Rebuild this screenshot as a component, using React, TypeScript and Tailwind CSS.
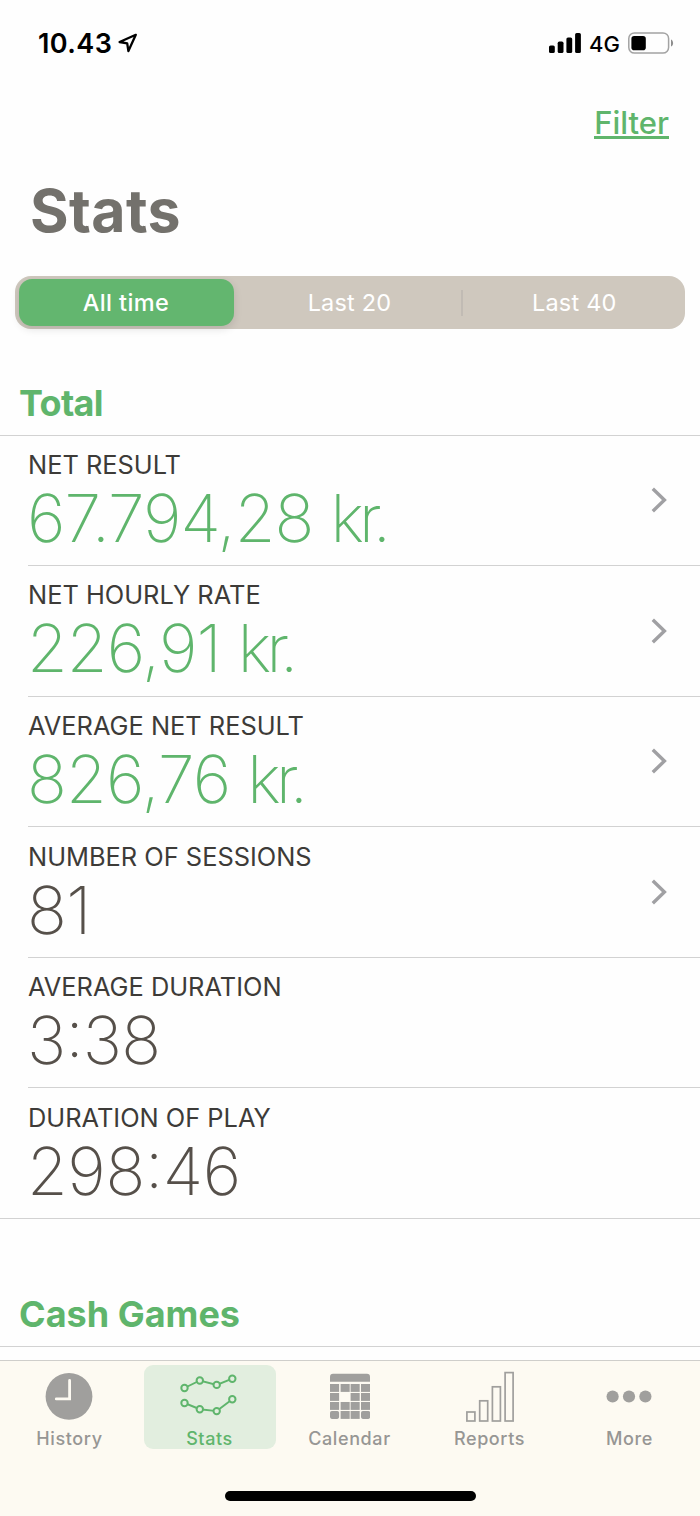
type Stat = {
  label: string;
  value: string;
  spacing: string;
  unit?: string;
  link?: boolean;
};

const stats: Stat[] = [
  { label: "NET RESULT", value: "67.794,28", spacing: "tracking-[-1px]", unit: "kr.", link: true },
  { label: "NET HOURLY RATE", value: "226,91", spacing: "tracking-[-0.9px]", unit: "kr.", link: true },
  { label: "AVERAGE NET RESULT", value: "826,76", spacing: "tracking-[-0.8px]", unit: "kr.", link: true },
  { label: "NUMBER OF SESSIONS", value: "81", spacing: "tracking-[-0.5px]", link: true },
  { label: "AVERAGE DURATION", value: "3:38", spacing: "tracking-[-0.8px]" },
  { label: "DURATION OF PLAY", value: "298:46", spacing: "tracking-[-0.4px]" },
];

function StatusBar() {
  return (
    <div className="flex h-[86px] items-center pl-[38px] pr-[26px] text-black">
      <span className="mt-px text-[27px] font-semibold leading-8 tracking-[0.4px]">10.43</span>
      <svg className="ml-[6px] h-[20px] w-[20px]" viewBox="0 0 20 20" fill="none" stroke="currentColor" strokeWidth="2.3" strokeLinejoin="round">
        <path d="M17.8 1.8 1.6 9 9.2 10.4 10.4 18Z" />
      </svg>
      <svg className="ml-auto h-[20px] w-[32px]" viewBox="0 0 32 20" fill="currentColor">
        <rect x="0" y="12.5" width="5.8" height="7.5" rx="1.6" />
        <rect x="8.7" y="8.6" width="5.8" height="11.4" rx="1.6" />
        <rect x="17.4" y="4.4" width="5.8" height="15.6" rx="1.6" />
        <rect x="26.1" y="0" width="5.8" height="20" rx="1.6" />
      </svg>
      <span className="ml-2 mt-[2px] text-[22px] font-medium leading-8">4G</span>
      <svg className="ml-2 h-[22px] w-[46px]" viewBox="0 0 46 22">
        <rect x="0.8" y="0.9" width="39.8" height="20.2" rx="5.6" fill="none" stroke="#a3a3a3" strokeWidth="1.5" />
        <rect x="3.4" y="4" width="14.4" height="14.2" rx="2.8" fill="#000" />
        <path d="M43 7.4c2.8 1.2 2.8 6 0 7.2Z" fill="#8e8e8e" />
      </svg>
    </div>
  );
}

function StatRow({ stat, last }: { stat: Stat; last: boolean }) {
  return (
    <div className={last ? "" : "pl-7"}>
      <div
        className={`flex h-[130.6px] items-center justify-between border-b border-[#d2d2d2] pr-[32px] ${
          last ? "pl-7" : ""
        }`}
      >
        <div className="flex h-full flex-col pt-[13.4px]">
          <span className="whitespace-nowrap text-[25.4px] leading-8 text-[#3d3b38]">{stat.label}</span>
          <span
            className={`-ml-px mt-1 flex whitespace-nowrap text-[66px] font-[150] leading-[66px] [font-feature-settings:'case'] ${
              stat.spacing
            } ${stat.unit ? "text-[#5fb56c]" : "text-[#56504a]"}`}
          >
            {stat.value}
            {stat.unit && <span className="ml-[17px] tracking-[-4.8px]">{stat.unit}</span>}
          </span>
        </div>
        {stat.link && (
          <svg className="h-[26px] w-[18px]" viewBox="0 0 18 26" fill="none" stroke="#a0a0a3" strokeWidth="3.4">
            <path d="M2.8 1.8 14.4 13 2.8 24.2" />
          </svg>
        )}
      </div>
    </div>
  );
}

function HistoryIcon() {
  return (
    <svg className="h-[52px] w-[52px] shrink-0" viewBox="0 0 52 52">
      <circle cx="26" cy="26.4" r="23.4" fill="#a09f9d" />
      <path d="M26.6 10.4V28.9H13.3" fill="none" stroke="#fdfaf2" strokeWidth="2.8" strokeLinecap="round" />
    </svg>
  );
}

function StatsIcon() {
  const top = [[4.5, 11.5], [19.8, 4], [36.7, 8.4], [52.3, 2.2]];
  const bottom = [[4.5, 26.5], [19.8, 32.7], [36.7, 34.6], [52.3, 22.8]];

  return (
    <svg className="-ml-px h-[52px] w-[57px] shrink-0" viewBox="0 -6.5 57 52" stroke="#5fb56c" fill="#e2eedf">
      <path d="M4.5 11.5 19.8 4 36.7 8.4 52.3 2.2M4.5 26.5 19.8 32.7 36.7 34.6 52.3 22.8" fill="none" strokeWidth="1.9" />
      {[...top, ...bottom].map(([x, y]) => (
        <circle key={`${x}-${y}`} cx={x} cy={y} r="3.2" strokeWidth="2" />
      ))}
    </svg>
  );
}

function CalendarIcon() {
  const cols = [0, 10.6, 20.6, 31];
  const rows = [10.2, 19.2, 28.2, 37.2];

  return (
    <svg className="ml-[2px] h-[52px] w-[40px] shrink-0" viewBox="0 -3.8 40 52" fill="#a09f9d">
      <path d="M0 8V3a3 3 0 0 1 3-3h34a3 3 0 0 1 3 3v5Z" />
      {rows.map((y, r) =>
        cols.map((x, c) =>
          r === 1 && c === 1 ? null : (
            <rect key={`${x}-${y}`} x={x} y={y} width="9.1" height="7.9" rx={r === 3 && (c === 0 || c === 3) ? 1.8 : 0} />
          )
        )
      )}
    </svg>
  );
}

function ReportsIcon() {
  return (
    <svg className="ml-[2px] h-[52px] w-[48px] shrink-0" viewBox="0 -1 48 52" fill="none" stroke="#a09f9d" strokeWidth="1.7">
      <rect x="0.9" y="41" width="8" height="9" />
      <rect x="13.7" y="29.8" width="8" height="20.2" />
      <rect x="26.4" y="15.8" width="8" height="34.2" />
      <rect x="39.1" y="1.6" width="8" height="48.4" />
    </svg>
  );
}

function MoreIcon() {
  return (
    <svg className="h-[52px] w-[46px] shrink-0" viewBox="0 0 46 52" fill="#a09f9d">
      <circle cx="6.6" cy="26.5" r="6.1" />
      <circle cx="23" cy="26.5" r="6.1" />
      <circle cx="39.4" cy="26.5" r="6.1" />
    </svg>
  );
}

const tabs = [
  { name: "History", icon: <HistoryIcon /> },
  { name: "Stats", icon: <StatsIcon />, active: true },
  { name: "Calendar", icon: <CalendarIcon /> },
  { name: "Reports", icon: <ReportsIcon /> },
  { name: "More", icon: <MoreIcon /> },
];

export default function App() {
  return (
    <div className="flex h-[1516px] w-[700px] flex-col overflow-hidden bg-[#fefefe] font-['Inter',sans-serif]">
      <StatusBar />

      <header className="flex h-[190px] flex-col">
        <div className="flex justify-end pr-[31px] pt-[21px]">
          <a className="h-8 border-b-[3px] border-[#5fb56c] text-[31px] font-medium leading-[31px] text-[#5fb56c]">Filter</a>
        </div>
        <h1 className="mt-[40px] pl-[30px] text-[59px] font-bold leading-[64px] tracking-[0.4px] text-[#73716c]">Stats</h1>
      </header>

      <div className="mx-[15px] flex h-[53px] shrink-0 items-center rounded-2xl bg-[#cfc8be] text-[23.5px] tracking-[0.2px] text-white">
        <div className="ml-[3.5px] flex h-[46.5px] w-[215px] items-center justify-center rounded-[13px] bg-[#63b66f] pt-px font-medium tracking-[0.4px] shadow-[0_3px_8px_rgba(0,0,0,0.12)]">
          All time
        </div>
        <div className="flex h-[26px] w-[229px] items-center justify-center border-r-2 border-[#c1bbb4] pl-[5px] pt-px">Last 20</div>
        <div className="flex flex-1 items-center justify-center pl-px pt-px">Last 40</div>
      </div>

      <h2 className="mt-[54px] h-[53px] shrink-0 border-b border-[#d2d2d2] pl-[19px] text-[36px] font-bold leading-[40px] tracking-[-0.7px] text-[#5fb56c]">
        Total
      </h2>
      <div className="-mt-[0.5px] shrink-0">
        {stats.map((stat, i) => (
          <StatRow key={stat.label} stat={stat} last={i === stats.length - 1} />
        ))}
      </div>

      <h2 className="mt-[75px] h-[53px] shrink-0 border-b border-[#d2d2d2] pl-[19px] text-[36px] font-bold leading-[40px] text-[#5fb56c]">
        Cash Games
      </h2>

      <nav className="mt-auto flex h-[156px] shrink-0 flex-col border-t border-[#cfcecb] bg-[#fdfaf2]">
        <div className="flex">
          {tabs.map((tab) => (
            <div key={tab.name} className="w-[140px] px-1 pt-1">
              <div
                className={`flex h-[84px] flex-col items-center rounded-[9px] pr-[2px] pt-[5px] ${
                  tab.active ? "bg-[#e2eedf] text-[#5fb56c]" : "text-[#979694]"
                }`}
              >
                {tab.icon}
                <span className="ml-px mt-[5px] text-[18px] font-medium leading-6 tracking-[0.6px]">{tab.name}</span>
              </div>
            </div>
          ))}
        </div>
        <div className="mx-auto mt-[42px] h-[10px] w-[251px] rounded-full bg-black" />
      </nav>
    </div>
  );
}
